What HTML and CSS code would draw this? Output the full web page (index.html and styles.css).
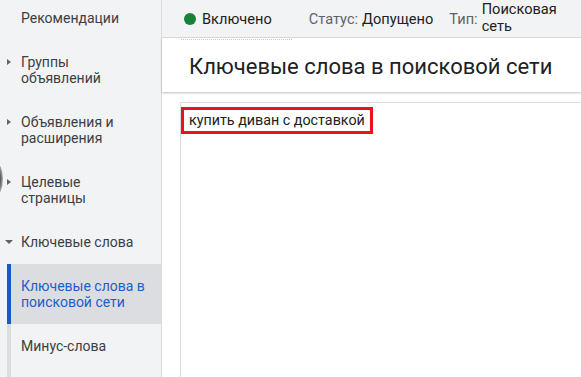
FILE: index.html
```html
<!DOCTYPE html>
<html lang="ru">
<head>
    <meta charset="UTF-8">
    <title>Ключевые слова в поисковой сети</title>
    <link rel="stylesheet" href="styles.css">
</head>
<body>
    <div class="layout">
        <!-- Left navigation -->
        <nav class="sidebar">
            <div class="nav-item">Рекомендации</div>
            <div class="nav-item has-arrow"><span class="arrow"></span>Группы<br>объявлений</div>
            <div class="nav-item has-arrow"><span class="arrow"></span>Объявления и<br>расширения</div>
            <div class="nav-item has-arrow"><span class="arrow"></span>Целевые<br>страницы</div>
            <div class="nav-item has-arrow open"><span class="arrow down"></span>Ключевые слова</div>
            <div class="sub-list">
                <div class="sub-item active">Ключевые слова в<br>поисковой сети</div>
                <div class="sub-item">Минус-слова</div>
            </div>
            <div class="side-shadow"></div>
        </nav>

        <main class="main">
            <!-- Status bar -->
            <div class="status-bar">
                <div class="status-part enabled"><span class="dot"></span>Включено</div>
                <div class="status-part"><span class="label">Статус:</span> Допущено</div>
                <div class="status-part type"><span class="label">Тип:</span><span class="two-lines">Поисковая<br>сеть</span></div>
            </div>

            <div class="page-header">
                <div class="dots"></div>
                <h1>Ключевые слова в поисковой сети</h1>
            </div>

            <div class="content">
                <div class="keyword-box">
                    <div class="keyword">купить диван с доставкой</div>
                </div>
            </div>
        </main>
    </div>
</body>
</html>
```

FILE: styles.css
```css
body {
    margin: 0;
    font-family: Roboto, "Noto Sans", Arial, sans-serif;
    background-color: #ffffff;
    overflow: hidden;
}

.layout {
    display: flex;
    height: 377px;
}

/* Sidebar */
.sidebar {
    position: relative;
    width: 161px;
    flex-shrink: 0;
    background-color: #f1f3f4;
    border-right: 1px solid #dadce0;
    margin-top: -4px;
    height: 381px;
}

.nav-item {
    position: relative;
    padding: 14px 0 14px 21px;
    font-size: 14px;
    line-height: 16px;
    color: #3c4043;
}

.arrow {
    position: absolute;
    left: 7px;
    top: 19px;
    width: 0;
    height: 0;
    border-top: 3px solid transparent;
    border-bottom: 3px solid transparent;
    border-left: 4px solid #5f6368;
}

.arrow.down {
    left: 5px;
    top: 20px;
    border-left: 4px solid transparent;
    border-right: 4px solid transparent;
    border-top: 4px solid #5f6368;
    border-bottom: none;
}

.sub-list {
    margin-left: 7px;
    border-left: 4px solid #dadce0;
    height: 117px;
}

.sub-item {
    padding: 14px 0 14px 10px;
    font-size: 14px;
    line-height: 16px;
    color: #3c4043;
}

.sub-item.active {
    background-color: #dcdde1;
    color: #1a5fc8;
    margin-left: -4px;
    border-left: 4px solid #1a5ac8;
}

.side-shadow {
    position: absolute;
    left: -12px;
    top: 166px;
    width: 15px;
    height: 34px;
    border-radius: 50%;
    background: radial-gradient(ellipse at center, #2a2a2a 0%, #444 40%, rgba(80, 80, 80, 0.3) 75%, rgba(80, 80, 80, 0) 100%);
}

/* Main area */
.main {
    flex: 1;
    min-width: 0;
}

.status-bar {
    display: flex;
    align-items: center;
    height: 37px;
    background-color: #f1f3f4;
    border-bottom: 1px solid #dadce0;
    padding-left: 22px;
    font-size: 14.6px;
    color: #202124;
}

.status-part {
    display: flex;
    align-items: center;
    margin-right: 16px;
}

.status-part.enabled {
    margin-right: 37px;
}

.dot {
    width: 12px;
    height: 12px;
    border-radius: 50%;
    background-color: #188038;
    margin-right: 6px;
}

.label {
    color: #5f6368;
    margin-right: 4px;
}

.status-part.type {
    margin-right: 0;
}

.two-lines {
    line-height: 17px;
    margin-top: -2px;
}

.page-header {
    position: relative;
    height: 54px;
    background-color: #ffffff;
    box-shadow: 0 1px 2px rgba(60, 64, 67, 0.35);
    display: flex;
    align-items: center;
    padding-left: 27px;
}

.dots {
    position: absolute;
    left: 19px;
    top: 1px;
    width: 111px;
    border-top: 1px dotted #c4c7ca;
}

.page-header h1 {
    margin: 0;
    font-size: 22px;
    font-weight: 400;
    color: #202124;
    padding-top: 3px;
}

.content {
    padding: 10px 0 0 18px;
}

.keyword-box {
    border-top: 1px solid #dadce0;
    border-left: 1px solid #dadce0;
    height: 280px;
    padding: 4px 0 0 0;
}

.keyword {
    display: inline-block;
    border: 3px solid #e8141d;
    padding: 2px 5px 2px 5px;
    font-size: 14.3px;
    line-height: 17px;
    color: #202124;
}
```
